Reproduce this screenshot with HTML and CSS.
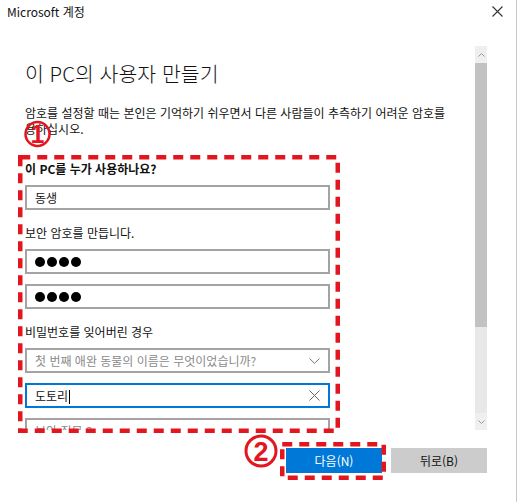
FILE: index.html
```html
<!DOCTYPE html>
<html lang="ko">

<head>
  <meta charset="UTF-8" />
  <title>Microsoft 계정</title>
  <link rel="stylesheet" href="styles.css">
</head>

<body>
  <div class="window">
    <!-- 제목 표시줄 -->
    <div class="titlebar">
      <span class="title">Microsoft 계정</span>
      <svg class="close" width="11" height="11" viewBox="0 0 11 11">
        <path d="M0.5 0.5 L10.5 10.5 M10.5 0.5 L0.5 10.5" stroke="#333" stroke-width="1.1" fill="none" />
      </svg>
    </div>

    <!-- 스크롤 영역 -->
    <div class="main">
      <div class="content">
        <h1>이 PC의 사용자 만들기</h1>
        <p class="intro">
          암호를 설정할 때는 본인은 기억하기 쉬우면서 다른 사람들이 추측하기 어려운 암호를<br />
          용하십시오.
        </p>

        <div class="label strong">이 PC를 누가 사용하나요?</div>
        <div class="field">동생</div>

        <div class="label">보안 암호를 만듭니다.</div>
        <div class="field dots"><span></span><span></span><span></span><span></span></div>
        <div class="field dots"><span></span><span></span><span></span><span></span></div>

        <div class="label">비밀번호를 잊어버린 경우</div>
        <div class="field select">
          <span class="placeholder">첫 번째 애완 동물의 이름은 무엇이었습니까?</span>
          <svg width="11" height="6" viewBox="0 0 11 6">
            <path d="M0.5 0.5 L5.5 5.3 L10.5 0.5" stroke="#777" stroke-width="1" fill="none" />
          </svg>
        </div>
        <div class="field focused">
          <span>도토리<i class="caret"></i></span>
          <svg width="11" height="11" viewBox="0 0 11 11">
            <path d="M0.5 0.5 L10.5 10.5 M10.5 0.5 L0.5 10.5" stroke="#666" stroke-width="1" fill="none" />
          </svg>
        </div>
        <div class="field">
          <span class="placeholder">보안 질문 2</span>
        </div>
      </div>

      <div class="scrollbar">
        <div class="arrow up">
          <svg width="7" height="4" viewBox="0 0 7 4"><path d="M0.5 3.5 L3.5 0.5 L6.5 3.5" stroke="#999" fill="none" /></svg>
        </div>
        <div class="thumb"></div>
        <div class="track"></div>
        <div class="arrow down">
          <svg width="7" height="4" viewBox="0 0 7 4"><path d="M0.5 0.5 L3.5 3.5 L6.5 0.5" stroke="#999" fill="none" /></svg>
        </div>
      </div>
    </div>

    <!-- 버튼 -->
    <div class="actions">
      <button class="btn primary">다음(N)</button>
      <button class="btn">뒤로(B)</button>
    </div>

    <!-- 빨간 표시 -->
    <svg class="marks" width="517" height="502" viewBox="0 0 517 502">
      <rect x="20.25" y="157.25" width="317.5" height="273.5" fill="none" stroke="#e3161f" stroke-width="4.5" stroke-dasharray="10 7" />
      <circle cx="37.5" cy="134" r="12" fill="none" stroke="#e3161f" stroke-width="2.5" />
      <text x="37.5" y="143" class="num" font-size="25">1</text>
      <rect x="282.25" y="444.25" width="101.5" height="33.5" fill="none" stroke="#e3161f" stroke-width="4.5" stroke-dasharray="10 7" />
      <circle cx="261" cy="451" r="15" fill="none" stroke="#e3161f" stroke-width="3" />
      <text x="261" y="461" class="num" font-size="27">2</text>
    </svg>
  </div>
</body>

</html>
```

FILE: styles.css
```css
body {
  margin: 0;
  background: #fff;
  font-family: 'Noto Sans CJK KR', 'Noto Sans', sans-serif;
  color: #111;
}

.window {
  position: relative;
  width: 516px;
  height: 502px;
  border-right: 1px solid #c8c8c8;
  display: flex;
  flex-direction: column;
  overflow: hidden;
}

.titlebar {
  height: 46px;
  display: flex;
  justify-content: space-between;
  align-items: flex-start;
  padding: 4px 13px 0 7px;
  box-sizing: border-box;
}

.title {
  font-size: 12px;
  line-height: 16px;
}

.close {
  margin-top: 2px;
}

.main {
  height: 384px;
  display: flex;
}

.content {
  width: 450px;
  padding-left: 25px;
  overflow: hidden;
}

h1 {
  font-size: 20.5px;
  font-weight: 300;
  line-height: 24px;
  margin: 15px 0 20px;
}

.intro {
  font-size: 12px;
  line-height: 16px;
  margin: 0 0 24px;
  white-space: nowrap;
}

.label {
  font-size: 12px;
  line-height: 16px;
  margin: 15px 0 8px;
}

.label.strong {
  font-weight: bold;
}

.field {
  width: 305px;
  height: 25px;
  box-sizing: border-box;
  border: 2px solid #a3a3a3;
  margin-bottom: 10px;
  padding: 0 8px;
  display: flex;
  align-items: center;
  justify-content: space-between;
  font-size: 12px;
  line-height: 16px;
}

.field.dots {
  justify-content: flex-start;
  gap: 2px;
}

.field.dots span {
  width: 10px;
  height: 10px;
  border-radius: 50%;
  background: #000;
}

.field.focused {
  border-color: #0078d7;
}

.placeholder {
  color: #8a8a8a;
}

.caret {
  display: inline-block;
  width: 1px;
  height: 14px;
  background: #000;
  vertical-align: -3px;
  margin-left: 1px;
}

.scrollbar {
  width: 12px;
  margin-right: 29px;
  display: flex;
  flex-direction: column;
  background: #e8e8e8;
}

.arrow {
  height: 17px;
  display: flex;
  justify-content: center;
  align-items: center;
  background: #efefef;
}

.thumb {
  height: 264px;
  background: #c2c2c2;
}

.track {
  flex: 1;
}

.actions {
  flex: 1;
  display: flex;
  justify-content: flex-end;
  align-items: flex-start;
  gap: 9px;
  padding: 18px 29px 0 0;
}

.btn {
  width: 96px;
  height: 25px;
  border: none;
  background: #cccccc;
  color: #111;
  font-family: 'Noto Sans CJK KR', 'Noto Sans', sans-serif;
  font-size: 12px;
  padding: 0;
}

.btn.primary {
  background: #0078d7;
  color: #fff;
}

.marks {
  position: absolute;
  top: 0;
  left: 0;
  pointer-events: none;
}

.num {
  fill: #e3161f;
  font-family: 'Liberation Sans', sans-serif;
  font-weight: bold;
  text-anchor: middle;
}
```
